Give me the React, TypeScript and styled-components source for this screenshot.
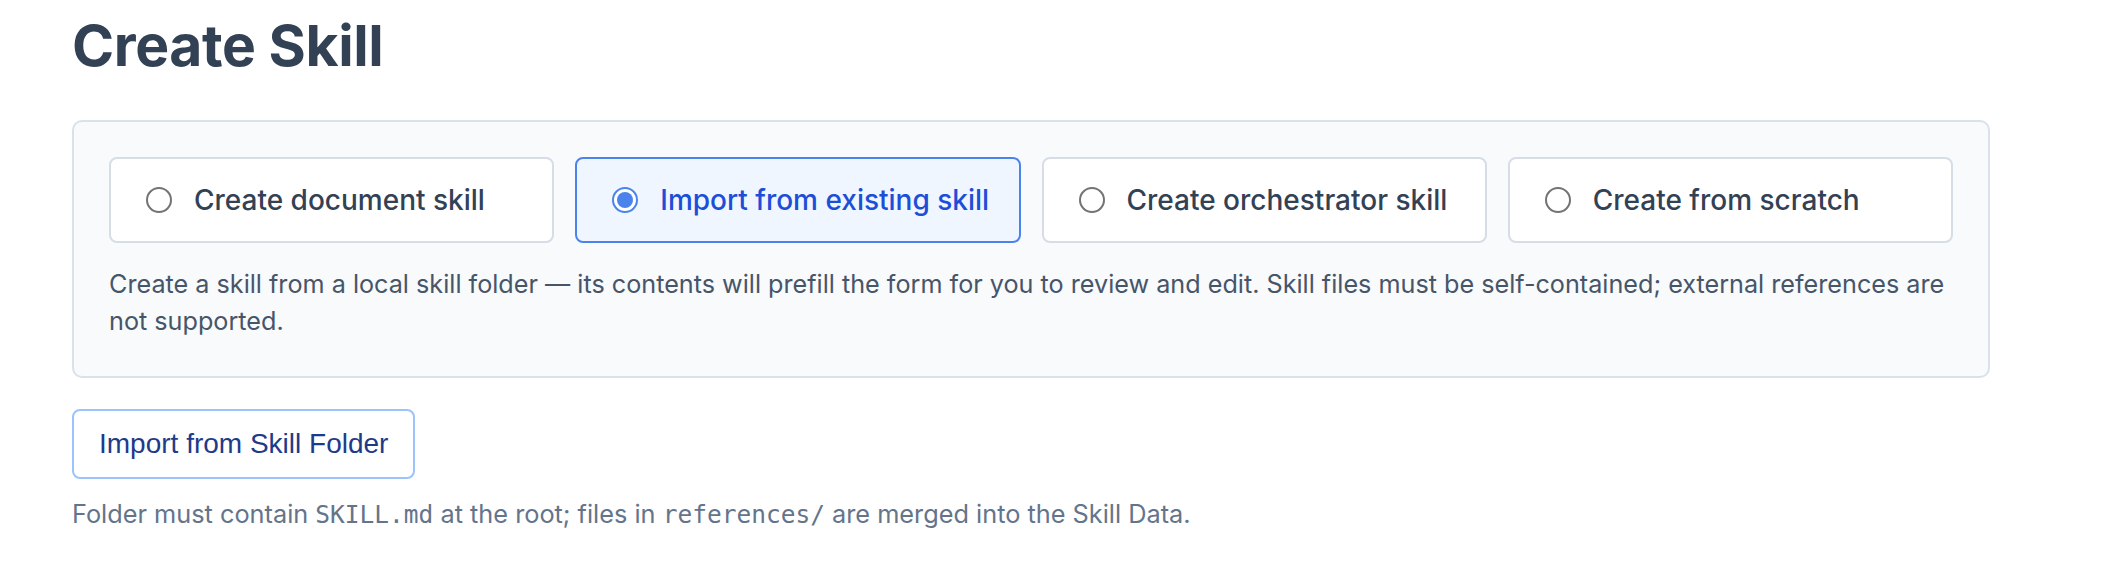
import { useState } from 'react';
import styled, { createGlobalStyle } from 'styled-components';

const GlobalStyle = createGlobalStyle`
  body {
    margin: 0;
    background: #ffffff;
    font-family: Inter, "Noto Sans", sans-serif;
  }
`;

const Page = styled.div`
  padding: 10px 116px 0 72px;
`;

const Title = styled.h1`
  margin: 0 0 38px;
  font-size: 57px;
  line-height: 72px;
  font-weight: 700;
  color: #334155;
  letter-spacing: -0.4px;
`;

const Panel = styled.section`
  border: 2px solid #dbe1ea;
  border-radius: 10px;
  background: #f8fafc;
  padding: 35px 35px 36px;
`;

const Options = styled.div`
  display: grid;
  grid-template-columns: repeat(4, minmax(0, 1fr));
  gap: 21px;
`;

const Card = styled.label<{ $active: boolean }>`
  display: flex;
  align-items: center;
  gap: 22px;
  height: 86px;
  box-sizing: border-box;
  padding: 0 16px 0 35px;
  border: 2px solid ${(p) => (p.$active ? '#4b83ec' : '#d7dde7')};
  border-radius: 8px;
  background: ${(p) => (p.$active ? '#eff6ff' : '#ffffff')};
  color: ${(p) => (p.$active ? '#1d4ed8' : '#334155')};
  font-size: 28px;
  font-weight: 500;
  white-space: nowrap;
  cursor: pointer;
`;

const Radio = styled.span<{ $active: boolean }>`
  flex: none;
  width: 26px;
  height: 26px;
  box-sizing: border-box;
  border-radius: 50%;
  border: 2px solid ${(p) => (p.$active ? '#4b83ec' : '#737373')};
  background: #ffffff;
  display: flex;
  align-items: center;
  justify-content: center;

  &::after {
    content: '';
    width: 16px;
    height: 16px;
    border-radius: 50%;
    background: #4b83ec;
    display: ${(p) => (p.$active ? 'block' : 'none')};
  }
`;

const Description = styled.p`
  margin: 23px 0 0;
  font-size: 25.2px;
  line-height: 37px;
  color: #475569;
`;

const ImportButton = styled.button`
  margin-top: 31px;
  height: 70px;
  padding: 0 25px;
  border: 2px solid #9cc3fb;
  border-radius: 8px;
  background: #ffffff;
  color: #1e3a8a;
  font-family: "Liberation Sans", Arial, sans-serif;
  font-size: 28px;
  cursor: pointer;
`;

const Help = styled.p`
  margin: 19px 0 0;
  font-size: 25.3px;
  line-height: 32px;
  color: #64748b;
`;

const Code = styled.code`
  font-family: "DejaVu Sans Mono", "Liberation Mono", monospace;
  font-size: 24.5px;
`;

const options = [
  'Create document skill',
  'Import from existing skill',
  'Create orchestrator skill',
  'Create from scratch',
];

export default function App() {
  const [selected, setSelected] = useState(1);

  return (
    <>
      <GlobalStyle />
      <Page>
        <Title>Create Skill</Title>
        <Panel>
          <Options>
            {options.map((label, i) => (
              <Card key={label} $active={i === selected} onClick={() => setSelected(i)}>
                <Radio $active={i === selected} />
                {label}
              </Card>
            ))}
          </Options>
          <Description>
            Create a skill from a local skill folder — its contents will prefill the form for you to
            review and edit. Skill files must be self-contained; external references are not
            supported.
          </Description>
        </Panel>
        <ImportButton>Import from Skill Folder</ImportButton>
        <Help>
          Folder must contain <Code>SKILL.md</Code> at the root; files in <Code>references/</Code>{' '}
          are merged into the Skill Data.
        </Help>
      </Page>
    </>
  );
}
